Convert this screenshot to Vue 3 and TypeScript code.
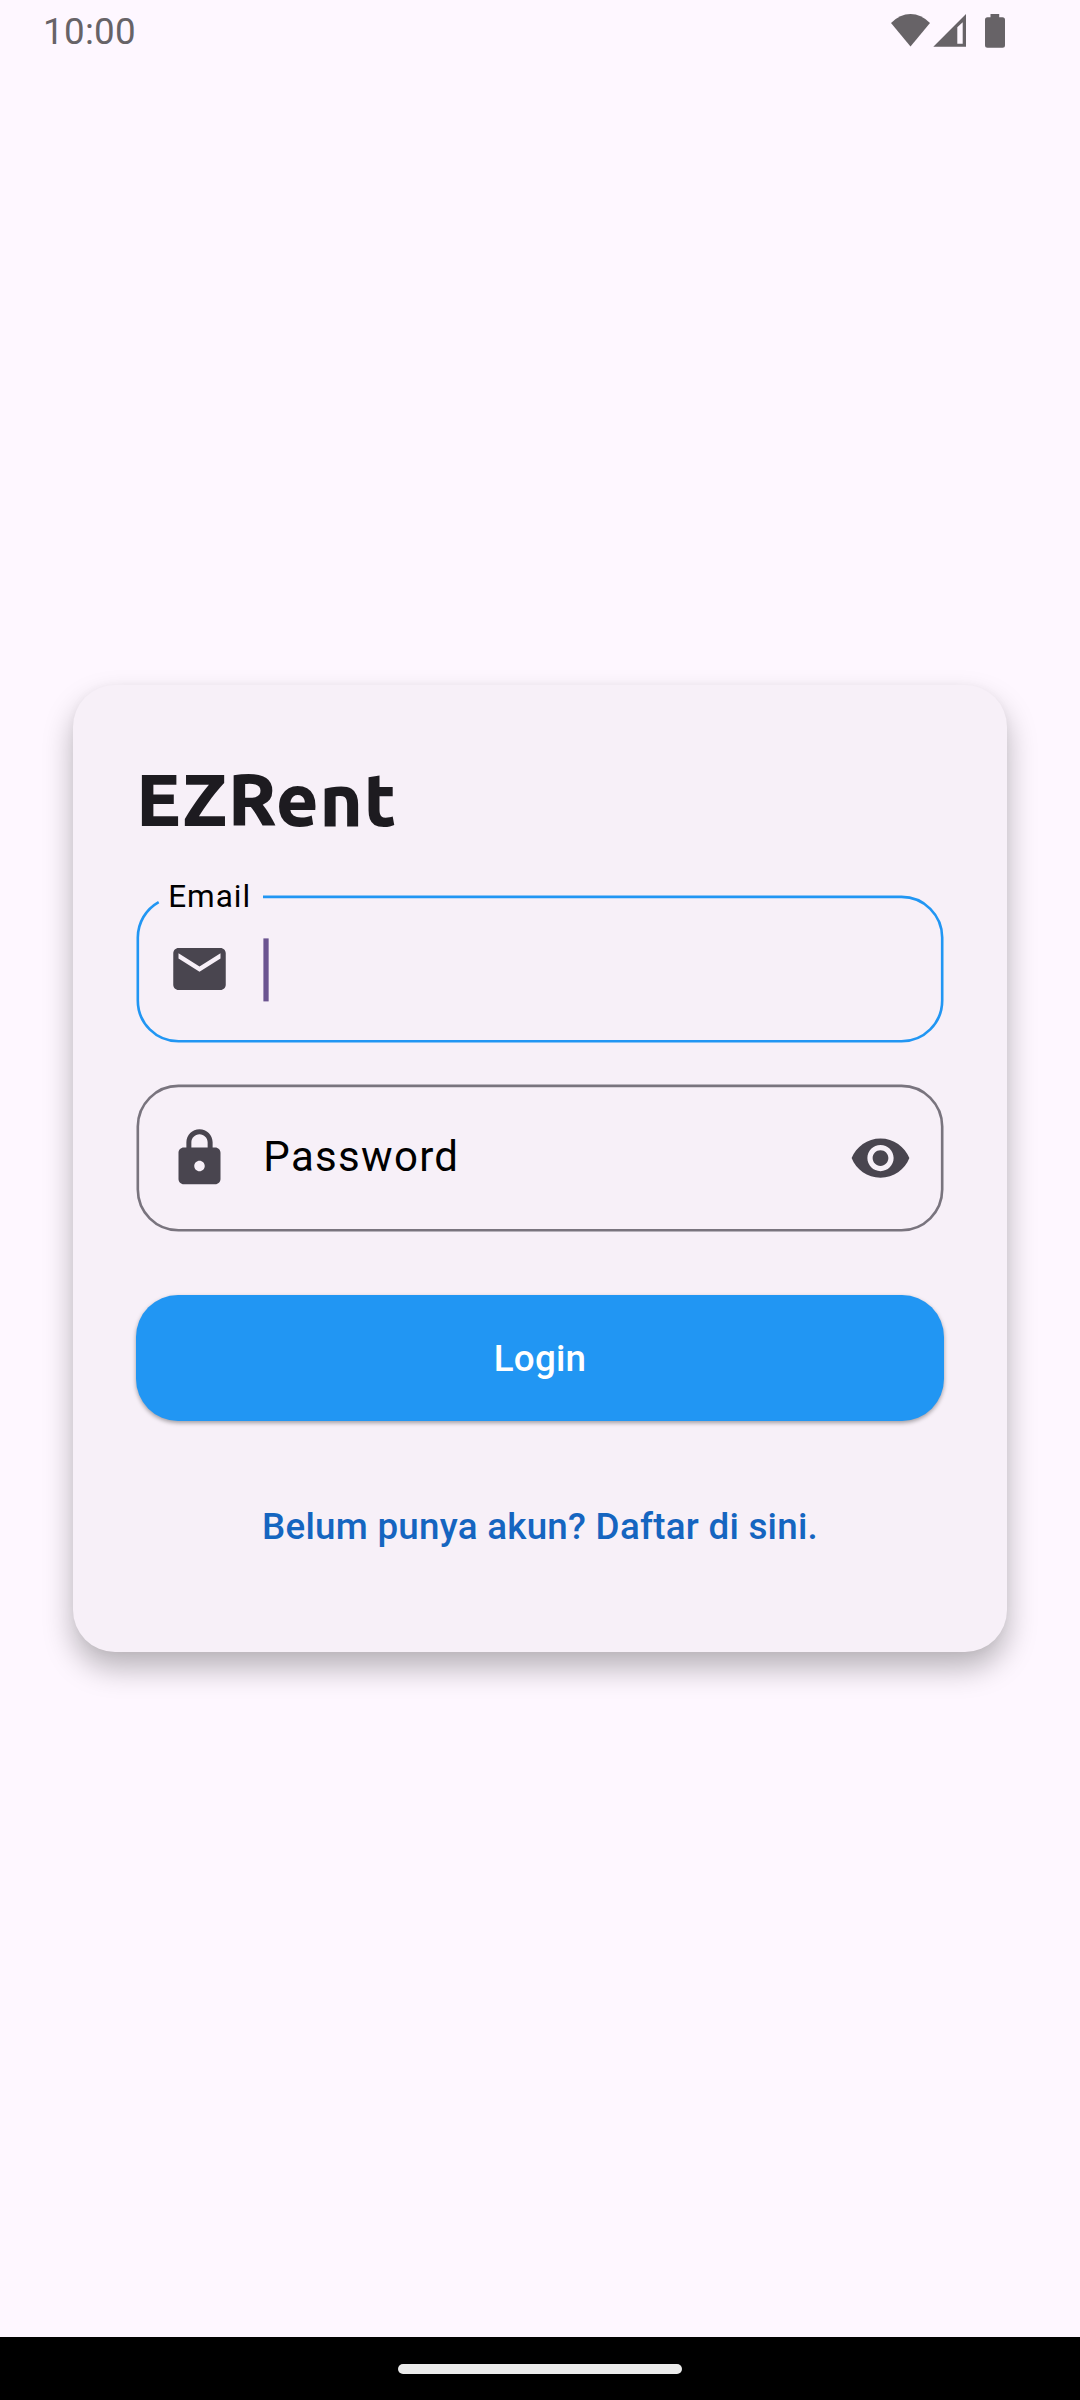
<script setup lang="ts">
import { ref } from 'vue'

const time = ref('10:00')
const title = ref('EZRent')
</script>

<template>
  <div class="screen">
    <header class="status">
      <span class="clock">{{ time }}</span>
      <svg class="status-icons" width="116" height="36" viewBox="890 13 116 36">
        <path d="M891 23Q900 14 910.500 14T930 23L910.500 46.500Z" />
        <path fill-rule="evenodd" d="M966 14V46.700H933.300ZM957.300 27.300V43.700H962.700V22.300Z" />
        <path d="M990.500 14h8.700v3.200h3.300q2.500 0 2.500 2.500v25.600q0 2.500-2.500 2.500h-15q-2.500 0-2.500-2.500v-25.600q0-2.500 2.500-2.500h3z" />
      </svg>
    </header>

    <main class="body">
      <section class="card">
        <h1 class="title">{{ title }}</h1>

        <div class="field">
          <svg class="outline" width="808" height="148" viewBox="-0.5 -0.6 808 148" fill="none" stroke="#2196f3" stroke-width="2.625">
            <path d="M126.500 1.310H765A40.690 40.690 0 0 1 805.690 42V105A40.690 40.690 0 0 1 765 145.690H42A40.690 40.690 0 0 1 1.310 105V42A40.690 40.690 0 0 1 22.200 6.440" />
          </svg>
          <span class="floating">Email</span>
          <svg class="icon" viewBox="0 -0.23 24 24"><path d="M20 4H4c-1.100 0-1.990.9-1.990 2L2 18c0 1.100.9 2 2 2h16c1.100 0 2-.9 2-2V6c0-1.100-.9-2-2-2zm0 4l-8 5-8-5V6l8 5 8-5v2z" /></svg>
          <svg class="caret" width="7" height="67" viewBox="0 0 7 67"><rect x="0.400" y="3.400" width="5.250" height="63" /></svg>
        </div>

        <div class="field second">
          <svg class="outline" width="808" height="148" viewBox="-0.5 -0.6 808 148" fill="none" stroke="#79747e" stroke-width="2.625">
            <rect x="1.310" y="1.310" width="804.380" height="144.380" rx="40.690" />
          </svg>
          <svg class="icon" viewBox="0 -0.23 24 24"><path d="M18 8h-1V6c0-2.760-2.240-5-5-5S7 3.240 7 6v2H6c-1.100 0-2 .9-2 2v10c0 1.100.9 2 2 2h12c1.100 0 2-.9 2-2V10c0-1.100-.9-2-2-2zm-6 9c-1.100 0-2-.9-2-2s.9-2 2-2 2 .9 2 2-.9 2-2 2zm3.100-9H8.900V6c0-1.710 1.390-3.100 3.100-3.100 1.710 0 3.100 1.390 3.100 3.100v2z" /></svg>
          <span class="placeholder">Password</span>
          <svg class="icon" viewBox="0 -0.23 24 24"><path d="M12 4.500C7 4.500 2.730 7.610 1 12c1.730 4.390 6 7.500 11 7.500s9.270-3.110 11-7.500c-1.730-4.390-6-7.500-11-7.500zM12 17c-2.760 0-5-2.240-5-5s2.240-5 5-5 5 2.240 5 5-2.240 5-5 5zm0-8c-1.660 0-3 1.340-3 3s1.340 3 3 3 3-1.340 3-3-1.340-3-3-3z" /></svg>
        </div>

        <button class="login" type="button">Login</button>
        <a class="register">Belum punya akun? Daftar di sini.</a>
      </section>
    </main>

    <footer class="navbar"><span class="handle"></span></footer>
  </div>
</template>

<style>
body {
  margin: 0;
  background: #fef7ff;
}
</style>

<style scoped>
.screen {
  width: 1080px;
  height: 2400px;
  display: flex;
  flex-direction: column;
  background: #fef7ff;
  font-family: Roboto, "Liberation Sans", sans-serif;
  overflow: hidden;
}
.status {
  height: 63px;
  box-sizing: border-box;
  padding: 0 74px 1px 43px;
  display: flex;
  align-items: center;
  justify-content: space-between;
}
.clock {
  font-size: 36.75px;
  line-height: 64px;
  height: 63px;
  letter-spacing: 0.300px;
  color: #676367;
}
.status-icons {
  fill: #676367;
}
.body {
  flex: 1;
  padding: 622px 73px 0;
}
.card {
  height: 967px;
  box-sizing: border-box;
  padding: 72px 63px 0;
  border-radius: 42px;
  background: #f7f0f8;
  box-shadow: 0 16px 30px rgba(0, 0, 0, 0.28), 0 0 10px rgba(0, 0, 0, 0.03);
  display: flex;
  flex-direction: column;
}
.title {
  margin: 0;
  height: 138px;
  font-family: Ubuntu, "Noto Sans", sans-serif;
  font-size: 73.700px;
  font-weight: 800;
  line-height: 84px;
  letter-spacing: 0.700px;
  color: #1d1b20;
}
.field {
  position: relative;
  height: 147px;
  flex: none;
  box-sizing: border-box;
  padding: 0 32px;
  display: flex;
  align-items: center;
}
.second {
  margin-top: 42px;
}
.outline {
  position: absolute;
  left: 0;
  top: 0;
}
.icon {
  width: 63px;
  height: 63px;
  flex: none;
  fill: #49454f;
}
.floating {
  position: absolute;
  left: 32.200px;
  top: -17px;
  font-size: 31.500px;
  line-height: 37px;
  letter-spacing: 0.980px;
  color: #000;
}
.caret {
  margin-left: 32px;
  fill: #6b5490;
}
.placeholder {
  flex: 1;
  margin-left: 32.300px;
  padding-bottom: 2px;
  font-size: 42px;
  line-height: 63px;
  letter-spacing: 1.312px;
  color: #000;
}
.login {
  margin: 64px 0 0;
  padding: 0;
  height: 126px;
  flex: none;
  border: 0;
  border-radius: 42px;
  background: #2196f3;
  box-shadow: 0 2px 4px rgba(0, 0, 0, 0.35);
  color: #fff;
  font: 500 36.750px/128px Roboto, "Liberation Sans", sans-serif;
  letter-spacing: 0.262px;
}
.register {
  margin-top: 42px;
  height: 126px;
  text-align: center;
  color: #1565c0;
  font-size: 36.750px;
  font-weight: 500;
  line-height: 128px;
  letter-spacing: 0.262px;
}
.navbar {
  height: 63px;
  background: #000;
  display: flex;
  align-items: center;
  justify-content: center;
}
.handle {
  width: 284px;
  height: 10px;
  border-radius: 5px;
  background: #ebebeb;
}
</style>
